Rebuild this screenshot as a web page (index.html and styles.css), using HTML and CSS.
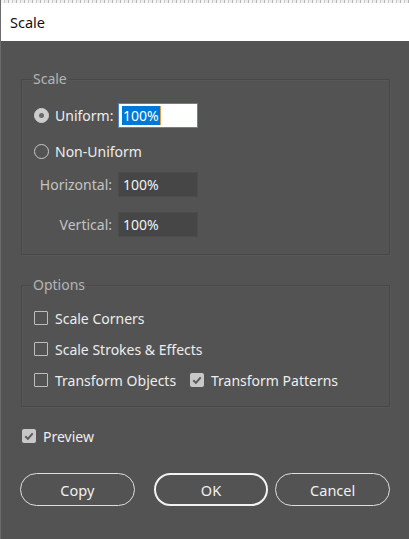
FILE: index.html
```
<!DOCTYPE html>
<html>
<head>
<meta charset="utf-8">
<title>Scale</title>
<link rel="stylesheet" href="styles.css">
</head>
<body>
<div class="dialog">
  <div class="topstrip"></div>
  <div class="titlebar"><span class="title">Scale</span></div>
  <div class="content">
    <fieldset class="group group-scale">
      <legend>Scale</legend>
      <div class="grid">
        <div class="cell-radio r1">
          <span class="radio on"></span><span class="lbl">Uniform:</span>
        </div>
        <div class="input active r1"><span class="sel">100%</span><span class="caret"></span></div>

        <div class="cell-radio r2">
          <span class="radio"></span><span class="lbl">Non-Uniform</span>
        </div>
        <div class="r2"></div>

        <div class="cell-label r3">Horizontal:</div>
        <div class="input r3">100%</div>

        <div class="cell-label r4">Vertical:</div>
        <div class="input r4">100%</div>
      </div>
    </fieldset>

    <fieldset class="group group-options">
      <legend>Options</legend>
      <div class="opt-row">
        <span class="check"></span><span class="lbl">Scale Corners</span>
      </div>
      <div class="opt-row gap">
        <span class="check"></span><span class="lbl">Scale Strokes &amp; Effects</span>
      </div>
      <div class="opt-row gap">
        <div class="opt-item first"><span class="check"></span><span class="lbl">Transform Objects</span></div>
        <div class="opt-item"><span class="check on"><svg viewBox="0 0 14 14" width="14" height="14"><path d="M3.3 7.3 L5.9 9.9 L10.7 4.3" fill="none" stroke="#5b5b5b" stroke-width="2"/></svg></span><span class="lbl">Transform Patterns</span></div>
      </div>
    </fieldset>

    <div class="preview-row">
      <span class="check on"><svg viewBox="0 0 14 14" width="14" height="14"><path d="M3.3 7.3 L5.9 9.9 L10.7 4.3" fill="none" stroke="#5b5b5b" stroke-width="2"/></svg></span><span class="lbl">Preview</span>
    </div>

    <div class="buttons">
      <div class="btn copy">Copy</div>
      <div class="btn ok">OK</div>
      <div class="btn cancel">Cancel</div>
    </div>
  </div>
</div>
</body>
</html>
```
FILE: styles.css
```
* { box-sizing: border-box; }
html, body {
  margin: 0;
  padding: 0;
  background: #535353;
}
body {
  font-family: "Noto Sans", "Open Sans", sans-serif;
  font-size: 14px;
  color: #ececec;
}
.dialog {
  width: 409px;
  height: 539px;
  background: #535353;
  border-left: 1px solid #6c6c6c;
  overflow: hidden;
}
.topstrip {
  height: 3px;
  background: repeating-linear-gradient(90deg, #f4f4f4 0 3px, #c9c9c9 3px 4px, #ededed 4px 7px, #b5b5b5 7px 8px);
}
.titlebar {
  height: 38px;
  background: #ffffff;
  display: flex;
  align-items: center;
  padding-left: 9px;
  padding-bottom: 1px;
}
.title {
  font-family: "Noto Sans", sans-serif;
  font-size: 14.5px;
  color: #111;
}
.content {
  padding: 30px 19px 0 20px;
}
.group {
  margin: 0;
  border: 1px solid #484848;
  box-shadow: inset 1px 1px 0 #575757, 1px 1px 0 #575757;
  padding: 0 0 0 12px;
}
.group legend {
  padding: 0 1px;
  margin-left: -2px;
  line-height: 16px;
  font-size: 14px;
  color: #b4b4b4;
}
.group-scale {
  padding-top: 16px;
  padding-bottom: 17px;
}
.grid {
  display: grid;
  grid-template-columns: 78px 80px;
  column-gap: 6px;
}
.r1 { height: 25px; }
.r2 { height: 25px; margin-top: 11px; }
.r3 { height: 25px; margin-top: 8px; }
.r4 { height: 25px; margin-top: 15px; }
.cell-radio {
  display: flex;
  align-items: center;
  white-space: nowrap;
}
.cell-label {
  display: flex;
  align-items: center;
  justify-content: flex-end;
  color: #c4c4c4;
}
.radio {
  width: 15px;
  height: 15px;
  border-radius: 50%;
  border: 1.5px solid #c8c8c8;
  margin-right: 6px;
  flex: none;
  position: relative;
}
.radio.on {
  background: #cdcdcd;
  border-color: #cdcdcd;
}
.radio.on::after {
  content: "";
  position: absolute;
  left: 3.5px;
  top: 3.5px;
  width: 5px;
  height: 5px;
  border-radius: 50%;
  background: #6a6a6a;
}
.lbl { white-space: nowrap; color: #ededed; }
.input {
  width: 80px;
  background: #464646;
  border: 1px solid #4c4c4c;
  display: flex;
  align-items: center;
  padding-left: 4px;
  color: #f2f2f2;
}
.input.active {
  background: #ffffff;
  border: 1px solid #4d86cf;
  padding-left: 3px;
}
.sel {
  background: #0078d7;
  color: #ffffff;
  line-height: 19px;
  padding: 0 1px;
}
.caret {
  width: 1px;
  height: 19px;
  background: #e0a040;
}
.group-options {
  margin-top: 22px;
  padding-top: 15px;
  padding-bottom: 16px;
}
.opt-row {
  height: 20px;
  display: flex;
  align-items: center;
}
.opt-row.gap { margin-top: 11px; }
.opt-item {
  display: flex;
  align-items: center;
}
.opt-item.first { width: 156px; }
.check {
  width: 14px;
  height: 14px;
  border: 1px solid #bdbdbd;
  border-radius: 1px;
  margin-right: 7px;
  flex: none;
  display: block;
}
.check.on {
  border: none;
  background: #c8c8c8;
  border-radius: 2px;
}
.check svg { display: block; }
.preview-row {
  margin-top: 19px;
  height: 20px;
  display: flex;
  align-items: center;
  padding-left: 1px;
}
.buttons {
  margin-top: 27px;
  display: flex;
  margin-left: -1px;
}
.btn {
  width: 115px;
  height: 33px;
  border: 1.5px solid #dedede;
  border-radius: 17px;
  display: flex;
  align-items: center;
  justify-content: center;
  color: #f0f0f0;
  font-size: 14.5px;
}
.btn.ok {
  margin-left: 19px;
  border: 2.5px solid #f2f2f2;
}
.btn.cancel { margin-left: 7px; }
```
